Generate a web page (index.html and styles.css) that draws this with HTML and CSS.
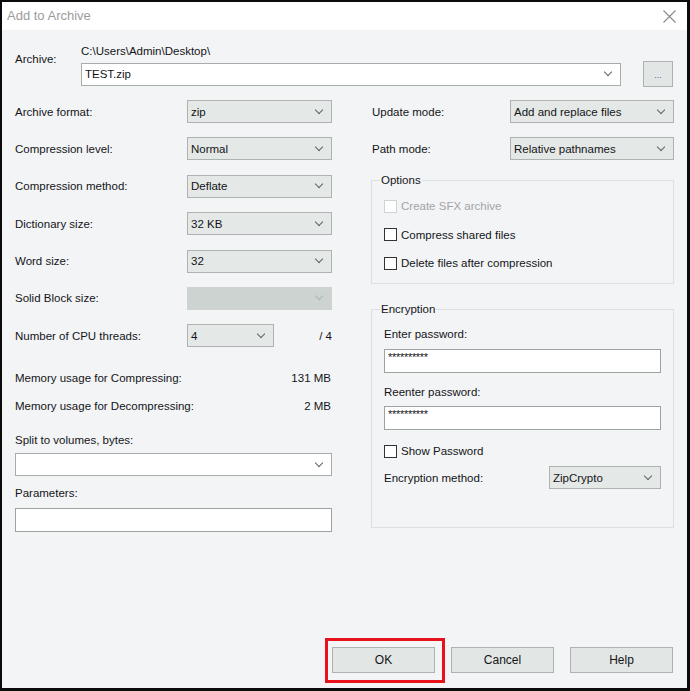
FILE: index.html
```html
<!DOCTYPE html>
<html>
<head>
<meta charset="utf-8">
<link rel="stylesheet" href="styles.css">
</head>
<body>
<div class="window">
  <div class="titlebar">
    <span class="title">Add to Archive</span>
    <svg class="close" width="13" height="13" viewBox="0 0 13 13"><path d="M0.5 0.5 L12.5 12.5 M12.5 0.5 L0.5 12.5" stroke="#8a8a8a" stroke-width="1.1" fill="none"/></svg>
  </div>
  <div class="body">
    <div class="archive-row">
      <div class="archive-label">Archive:</div>
      <div class="archive-main">
        <div class="path">C:\Users\Admin\Desktop\</div>
        <div class="archive-input-row">
          <div class="combo white archive-combo"><span>TEST.zip</span></div>
          <div class="browse">...</div>
        </div>
      </div>
    </div>

    <div class="columns">
      <div class="col-left">
        <div class="form-grid">
          <div class="lbl">Archive format:</div>
          <div class="combo"><span>zip</span></div>
          <div class="lbl">Compression level:</div>
          <div class="combo"><span>Normal</span></div>
          <div class="lbl">Compression method:</div>
          <div class="combo"><span>Deflate</span></div>
          <div class="lbl">Dictionary size:</div>
          <div class="combo"><span>32 KB</span></div>
          <div class="lbl">Word size:</div>
          <div class="combo"><span>32</span></div>
          <div class="lbl">Solid Block size:</div>
          <div class="combo disabled"><span></span></div>
          <div class="lbl">Number of CPU threads:</div>
          <div class="cpu-cell">
            <div class="combo cpu-combo"><span>4</span></div>
            <span class="cpu-max">/ 4</span>
          </div>
        </div>

        <div class="mem-grid">
          <div class="lbl">Memory usage for Compressing:</div>
          <div class="val">131 MB</div>
          <div class="lbl">Memory usage for Decompressing:</div>
          <div class="val">2 MB</div>
        </div>

        <div class="lbl split-label">Split to volumes, bytes:</div>
        <div class="combo white split-combo"><span></span></div>

        <div class="lbl params-label">Parameters:</div>
        <div class="textbox params-box"></div>
      </div>

      <div class="col-right">
        <div class="mode-grid">
          <div class="lbl">Update mode:</div>
          <div class="combo"><span>Add and replace files</span></div>
          <div class="lbl">Path mode:</div>
          <div class="combo"><span>Relative pathnames</span></div>
        </div>

        <fieldset class="group options">
          <legend>Options</legend>
          <div class="group-body options-body">
            <label class="check disabled-check"><span class="box"></span>Create SFX archive</label>
            <label class="check"><span class="box"></span>Compress shared files</label>
            <label class="check"><span class="box"></span>Delete files after compression</label>
          </div>
        </fieldset>

        <fieldset class="group encryption">
          <legend>Encryption</legend>
          <div class="group-body enc-body">
            <div class="lbl">Enter password:</div>
            <div class="textbox pw"><span>**********</span></div>
            <div class="lbl reenter">Reenter password:</div>
            <div class="textbox pw pw2"><span>**********</span></div>
            <label class="check show-pw"><span class="box"></span>Show Password</label>
            <div class="enc-method">
              <div class="lbl">Encryption method:</div>
              <div class="combo enc-combo"><span>ZipCrypto</span></div>
            </div>
          </div>
        </fieldset>
      </div>
    </div>

    <div class="buttons">
      <div class="ok-wrap">
        <div class="btn">OK</div>
        <div class="highlight"></div>
      </div>
      <div class="btn">Cancel</div>
      <div class="btn">Help</div>
    </div>
  </div>
</div>
</body>
</html>
```

FILE: styles.css
```css
html, body {
  margin: 0;
  padding: 0;
  background: #000;
}

.window {
  width: 690px;
  height: 691px;
  box-sizing: border-box;
  border: 2px solid #0b0b0b;
  border-right-width: 3px;
  border-bottom-width: 3px;
  display: flex;
  flex-direction: column;
  font-family: "Liberation Sans", Arial, sans-serif;
  font-size: 11.5px;
  line-height: 14px;
  color: #141418;
  overflow: hidden;
}

.titlebar {
  height: 28px;
  flex: none;
  background: #ffffff;
  display: flex;
  align-items: center;
  justify-content: space-between;
  padding: 0 11px 0 5px;
}

.title {
  font-size: 13px;
  color: #9c9c9c;
}

.close {
  display: block;
}

.body {
  flex: 1;
  background: #f3f4f6;
  padding: 14px 13px 15px 13px;
  display: flex;
  flex-direction: column;
}

/* Archive row */
.archive-row {
  display: grid;
  grid-template-columns: 66px 1fr;
}

.archive-label {
  padding-top: 8px;
}

.path {
  height: 14px;
}

.archive-input-row {
  margin-top: 3px;
  display: flex;
  align-items: center;
  gap: 22px;
  padding-right: 1px;
}

.archive-combo {
  flex: 1;
  height: 23px;
}

.browse {
  width: 30px;
  height: 26px;
  box-sizing: border-box;
  border: 1px solid #adb3b1;
  background: #e2e6e4;
  color: #6a55b0;
  font-size: 9px;
  line-height: 9px;
  display: flex;
  align-items: center;
  justify-content: center;
  padding-top: 3px;
}

/* Combo box */
.combo {
  box-sizing: border-box;
  height: 23px;
  border: 1px solid #adb3b1;
  background: #e4e8e6;
  display: flex;
  align-items: center;
  justify-content: space-between;
  padding: 0 9px 0 3px;
  white-space: nowrap;
}

.combo::after {
  content: "";
  width: 5px;
  height: 5px;
  border-right: 1px solid #5e6462;
  border-bottom: 1px solid #5e6462;
  transform: rotate(45deg);
  margin-top: -4px;
}

.combo.white {
  background: #ffffff;
  border-color: #a7adab;
}

.combo.disabled {
  background: #ccd3d1;
  border-color: #ccd3d1;
}

.combo.disabled::after {
  border-color: #aeb5b3;
}

.textbox {
  box-sizing: border-box;
  border: 1px solid #9da3a1;
  background: #ffffff;
}

/* Columns */
.columns {
  margin-top: 13px;
  display: flex;
  gap: 39px;
}

.col-left {
  width: 317px;
  display: flex;
  flex-direction: column;
}

.col-right {
  width: 303px;
  display: flex;
  flex-direction: column;
}

.form-grid {
  display: grid;
  grid-template-columns: 172px 145px;
  grid-auto-rows: 23px;
  row-gap: 14.4px;
  align-items: center;
}

.cpu-cell {
  display: flex;
  align-items: center;
  justify-content: space-between;
  height: 23px;
}

.cpu-combo {
  width: 87px;
}

.mem-grid {
  margin-top: 24px;
  display: grid;
  grid-template-columns: 1fr auto;
  grid-auto-rows: 14px;
  row-gap: 14px;
}

.val {
  text-align: right;
  padding-right: 1px;
}

.split-label {
  margin-top: 20px;
}

.split-combo {
  margin-top: 6px;
  height: 23px;
}

.params-label {
  margin-top: 10px;
}

.params-box {
  margin-top: 8px;
  height: 24px;
}

/* Right column */
.mode-grid {
  display: grid;
  grid-template-columns: 139px 164px;
  grid-auto-rows: 23px;
  row-gap: 14px;
  align-items: center;
}

.mode-grid .lbl {
  padding-left: 1px;
}

.group {
  margin: 0;
  padding: 0;
  border: 1px solid #dcdfe3;
  min-width: 0;
}

.group legend {
  margin-left: 8px;
  padding: 0 1px;
  line-height: 14px;
}

.options {
  margin-top: 13px;
}

.options-body {
  padding: 12px 12px 13px 12px;
  display: flex;
  flex-direction: column;
  gap: 14.5px;
}

.check {
  display: flex;
  align-items: center;
  gap: 4px;
  height: 14px;
}

.box {
  width: 13px;
  height: 13px;
  box-sizing: border-box;
  border: 1px solid #333;
  background: #fff;
  flex: none;
}

.disabled-check {
  color: #a2a4a8;
}

.disabled-check .box {
  border-color: #d0d3d6;
}

.encryption {
  margin-top: 18px;
}

.enc-body {
  padding: 11px 12px 38px 12px;
  display: flex;
  flex-direction: column;
}

.pw {
  margin-top: 8px;
  height: 24px;
  padding: 1px 3px 0;
  font-size: 11px;
  line-height: 12px;
  letter-spacing: -0.3px;
}

.pw2 {
  margin-top: 7px;
}

.reenter {
  margin-top: 12px;
}

.show-pw {
  margin-top: 14px;
}

.enc-method {
  margin-top: 8px;
  display: flex;
  align-items: center;
  justify-content: space-between;
}

.enc-combo {
  width: 112px;
}

/* Buttons */
.buttons {
  margin-top: auto;
  display: flex;
  justify-content: flex-end;
  gap: 16px;
  padding-right: 1px;
}

.btn {
  width: 103px;
  height: 26px;
  box-sizing: border-box;
  border: 1px solid #adb3b1;
  background: #e2e6e4;
  display: flex;
  align-items: center;
  justify-content: center;
  font-size: 12px;
}

.ok-wrap {
  position: relative;
}

.highlight {
  position: absolute;
  top: -9px;
  left: -7px;
  right: -10px;
  bottom: -10px;
  border: 3px solid #e8121c;
  pointer-events: none;
}
```
